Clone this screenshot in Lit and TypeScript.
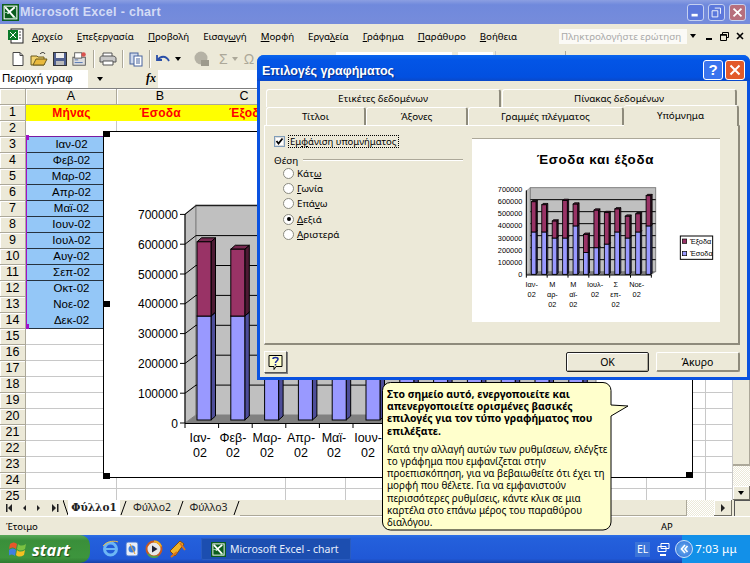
import { LitElement, html, css, svg } from "lit";
import { customElement } from "lit/decorators.js";

const VALUES: [number, number][] = [[350,600],[350,575],[300,440],[300,610],[400,580],[180,330],[220,530],[250,510],[350,540],[300,480],[350,500],[400,650]];
const MONTHS = ["Ιαν-02","Φεβ-02","Μαρ-02","Απρ-02","Μαϊ-02","Ιουν-02","Ιουλ-02","Αυγ-02","Σεπ-02","Οκτ-02","Νοε-02","Δεκ-02"];

function bar(x:number,w:number,base:number,mid:number,top:number,dx:number,dy:number,sw:number){
  const seg=(y1:number,y2:number,f:string,s:string,t:string)=>svg`
    <polygon points="${x+w},${y1} ${x+w+dx},${y1-dy} ${x+w+dx},${y2-dy} ${x+w},${y2}" fill=${s} stroke="#000" stroke-width=${sw}/>
    <polygon points="${x},${y1} ${x+dx},${y1-dy} ${x+w+dx},${y1-dy} ${x+w},${y1}" fill=${t} stroke="#000" stroke-width=${sw}/>
    <rect x=${x} y=${y1} width=${w} height=${y2-y1} fill=${f} stroke="#000" stroke-width=${sw}/>`;
  return svg`${seg(mid,base,"#9999ff","#4d4d99","#7777cc")}${seg(top,mid,"#993366","#4d1a33","#772850")}`;
}

function mainChart(){
  const ys=[0,1,2,3,4,5,6,7];
  const step=29.8;
  const xl=[["Ιαν-",201],["Φεβ-",234],["Μαρ-",268],["Απρ-",302],["Μαϊ-",335],["Ιουν-",369]] as [string,number][];
  return html`<svg class="chart-svg" width="590" height="347" viewBox="103 131 590 347">
    <polygon points="186,215 197,206 197,416 186,424" fill="#c0c0c0" stroke="#808080"/>
    <rect x="197" y="206" width="400" height="210" fill="#c0c0c0" stroke="#808080"/>
    <polygon points="186,424 197,416 597,416 586,424" fill="#808080"/>
    ${ys.slice(1).map(i=>svg`<line x1="197" x2="597" y1=${416-i*29.9} y2=${416-i*29.9} stroke="#000" stroke-width="1"/>
      <line x1="186" x2="197" y1=${424-i*step} y2=${416-i*29.9} stroke="#000" stroke-width="1"/>`)}
    ${VALUES.map((v,i)=>bar(198+i*33.8,14,421,421-v[0]*0.297,421-v[1]*0.297,4.5,4,1))}
    <line x1="186" x2="186" y1="215" y2="424" stroke="#000"/>
    <line x1="186" x2="590" y1="424.5" y2="424.5" stroke="#000"/>
    ${[0,1,2,3,4,5,6,7,8,9,10,11,12].map(i=>svg`<line x1=${186+i*33.6} x2=${186+i*33.6} y1="424" y2="429" stroke="#000"/>`)}
    ${ys.map(i=>svg`<line x1="181" x2="186" y1=${424-i*step} y2=${424-i*step} stroke="#000"/>
      <text class="c-y" x="179" y=${428.5-i*step} text-anchor="end">${i===0?"0":i+"00000"}</text>`)}
    ${xl.map(([t,x])=>svg`<text class="c-x" x=${x} y="443" text-anchor="middle">${t}</text>
      <text class="c-x" x=${x} y="458" text-anchor="middle">02</text>`)}
  </svg>`;
}

function miniChart(){
  const lab:[string[],number][]=[[["Ιαν-","02"],200],[["Μ","αρ-","02"],262],[["Μ","αϊ-","02"],325],[["Ιουλ-","02"],390],[["Σ","επ-","02"],452],[["Νοε-","02"],515]];
  return html`<svg class="mini" width="248" height="183" viewBox="21 24 744 549">
    <text class="m-title" x="391" y="98" text-anchor="middle">Έσοδα και έξοδα</text>
    <polygon points="184,180 196,170 196,418 184,431" fill="#c0c0c0" stroke="#808080" stroke-width="2"/>
    <rect x="196" y="170" width="376" height="252" fill="#c0c0c0" stroke="#808080" stroke-width="3"/>
    <polygon points="184,431 196,422 572,422 560,431" fill="#808080"/>
    ${[1,2,3,4,5,6].map(i=>svg`<line x1="196" x2="572" y1=${422-i*36} y2=${422-i*36} stroke="#000" stroke-width="3"/>`)}
    ${VALUES.map((v,i)=>bar(199+i*31.3,14,430,430-v[0]*0.363,430-v[1]*0.363,4,4,2.6))}
    <line x1="184" x2="560" y1="432" y2="432" stroke="#000" stroke-width="3"/>
    <line x1="184" x2="184" y1="178" y2="432" stroke="#000" stroke-width="3"/>
    ${[0,1,2,3,4,5,6,7].map(i=>svg`<text class="m-y" x="172" y=${438-i*36.4} text-anchor="end">${i===0?"0":i+"00000"}</text>`)}
    ${[0,1,2,3,4,5,6].map(i=>svg`<line x1=${184+i*62.5} x2=${184+i*62.5} y1="432" y2="440" stroke="#000" stroke-width="3"/>`)}
    ${lab.map(([ls,x])=>ls.map((t,k)=>svg`<text class="m-y" x=${x} y=${467+k*31} text-anchor="middle">${t}</text>`))}
    <rect x="646" y="315" width="97" height="70" fill="#fff" stroke="#000" stroke-width="3"/>
    <rect x="652" y="324" width="13" height="13" fill="#993366" stroke="#000" stroke-width="2"/>
    <text class="m-y" x="675" y="338">Έξοδα</text>
    <rect x="652" y="361" width="13" height="13" fill="#9999ff" stroke="#000" stroke-width="2"/>
    <text class="m-y" x="675" y="375">Έσοδα</text>
  </svg>`;
}

const xlIcon=(s:number)=>html`<svg width=${s} height=${s} viewBox="0 0 16 16"><rect width="16" height="16" fill="#0b5d1e"/><rect x="2" y="2" width="12" height="12" fill="#0b5d1e" stroke="#fff" stroke-width="1"/><path d="M3 3l9 10M12 3L5 9" stroke="#fff" stroke-width="1.8" fill="none"/><path d="M2 8h4M10 13h4" stroke="#8fd19e"/></svg>`;

const tools = html`
  <svg width="16" height="16" viewBox="0 0 16 16"><path d="M3 1.5h7l3 3v10H3z" fill="#fff" stroke="#444"/><path d="M10 1.5v3h3" fill="none" stroke="#444"/></svg>
  <svg width="18" height="16" viewBox="0 0 18 16"><path d="M1 5h6l1 1h6v8H1z" fill="#f3d36b" stroke="#6b5a1e"/><path d="M3 14l3-6h11l-3 6z" fill="#e9b93c" stroke="#6b5a1e"/><path d="M10 3c2-2 4-2 5 0" stroke="#222" fill="none"/></svg>
  <svg width="16" height="16" viewBox="0 0 16 16"><rect x="1.5" y="1.5" width="13" height="13" fill="#4f5f8f" stroke="#333"/><rect x="4" y="2" width="8" height="5" fill="#eee"/><rect x="4" y="10" width="8" height="4" fill="#bbb"/></svg>
  <svg width="16" height="18" viewBox="0 0 18 18"><rect x="1" y="7" width="14" height="9" fill="#ddd" stroke="#555"/><rect x="3" y="2" width="8" height="6" fill="#fff" stroke="#555"/><circle cx="13" cy="4" r="2.5" fill="#d9534f"/><path d="M3 10h4M3 13h9" stroke="#4a6fb0"/></svg>
  <i class="sep"></i>
  <svg width="18" height="16" viewBox="0 0 18 16"><path d="M4 2h9v4H4z" fill="#fff" stroke="#555"/><path d="M1 7c0-1 1-2 2-2h11c1 0 3 1 3 2v4H1z" fill="#c8c8c8" stroke="#555"/><path d="M4 10h10v4H4z" fill="#fff" stroke="#555"/></svg>
  <i class="sep"></i>
  <svg width="16" height="16" viewBox="0 0 16 16"><rect x="2" y="2" width="8" height="11" fill="#cfd9ec" stroke="#46629c"/><rect x="6" y="5" width="8" height="10" fill="#fff" stroke="#46629c"/><path d="M8 8h4M8 10h4M8 12h4" stroke="#46629c"/></svg>
  <i class="sep"></i>
  <svg width="16" height="14" viewBox="0 0 16 14"><path d="M2 3v5h5M3 8c2-4 8-5 11 1" fill="none" stroke="#2a4fa8" stroke-width="1.8"/></svg>
  <b class="tri small"></b>
  <i class="gap"></i>
  <svg width="20" height="18" viewBox="0 0 20 18"><circle cx="9" cy="8" r="6.5" fill="#b5b2a5"/><rect x="9" y="10" width="8" height="6" fill="#9d9a8c"/></svg>
  <span class="sigma">Σ</span><b class="tri small grey"></b>
  <span class="sigma om">Ω</span>`;

const sliver = html`<div class="sliver"><i class="sb a"></i><i class="sb b"></i><i class="sl c"></i><i class="sl d"></i></div>`;

@customElement("app-root")
export class AppRoot extends LitElement {
  static styles = css`
    :host{display:block;width:750px;height:563px;position:relative;overflow:hidden;background:#ece9d8;font-family:"Noto Sans","Liberation Sans",sans-serif;font-size:9.8px;color:#000}
    .app{display:flex;flex-direction:column;height:563px}
    .title{height:24px;flex:none;display:flex;align-items:center;padding-left:2px;gap:1px;background:linear-gradient(#8b9fe2 0,#7089dc 20%,#768cdb 100%)}
    .title .txt{font:bold 12.5px "Liberation Sans",sans-serif;color:#d3dbf5;letter-spacing:.3px;margin-top:-1px}
    .capbtns{margin-left:auto;display:flex;gap:4px;padding-right:4px}
    .cb{width:17px;height:17px;border-radius:3px;border:1px solid #c5d0f0;background:#5c78dc;position:relative;box-sizing:border-box}
    .cb svg{position:absolute;inset:0}
    .cb.x{background:#b76f7d}
    .menu{height:24px;flex:none;display:flex;align-items:center;padding-left:8px;position:relative}
    .menu .mi{margin-right:14px;white-space:nowrap;font-size:9.7px}
    .menu .grip{margin-right:8px;display:flex}
    .ask{margin-left:auto;margin-right:6px;display:flex;align-items:center}
    .askbox{width:128px;height:15px;background:#fbfaf6;color:#a9a9a9;line-height:15px;padding-left:2px;box-sizing:border-box;overflow:hidden;white-space:nowrap}
    .tri{display:inline-block;width:0;height:0;border:3.5px solid transparent;border-top:4px solid #000;border-bottom:0}
    .tri.small{margin-left:0}
    .tri.grey{border-top-color:#aca899}
    .tri.askt{margin-left:3px}
    .win{display:flex;gap:7px;margin-left:9px;align-items:center}
    .toolbar{height:22px;flex:none;display:flex;align-items:center;padding-left:10px;gap:4px;position:relative}
    .sep{width:1px;height:18px;background:#aca899;margin:0 0 0 1px;border-right:1px solid #fff}
    .gap{width:3px}
    .sigma{font:14px "Liberation Sans",sans-serif;color:#aca899;margin-left:3px}
    .sigma.om{margin-left:2px}
    .sliver{position:absolute;left:0;top:0;width:750px;height:22px}
    .sb{position:absolute;top:4px;height:6px;background:#fff}
    .sb.a{left:336px;width:116px}.sb.b{left:458px;width:35px}
    .sl{position:absolute;top:3px;height:8px;width:1px;background:#aca899}
    .sl.c{left:495px}.sl.d{left:565px}
    .fbar{height:18px;flex:none;display:flex;align-items:stretch}
    .name{width:88px;background:#fff;font:11.5px/17px "Liberation Sans",sans-serif;padding-left:2px;box-sizing:border-box;white-space:nowrap;overflow:hidden}
    .namedrop{width:22px;display:flex;align-items:center;justify-content:center;padding-left:2px;box-sizing:border-box}
    .fx{width:48px;text-align:right;padding-right:2px;box-sizing:border-box;font:italic bold 12px "Liberation Serif",serif;line-height:17px}
    .finput{flex:1;background:#fff}
    .main{flex:1;min-height:0;display:flex;position:relative}
    .sheet{width:733px;height:412px;overflow:hidden;display:grid;grid-template-columns:26px 91px 86px 83px 60px 301px 59px 27px;grid-auto-rows:16px;background:#fff;border-top:1px solid #808080;box-sizing:border-box;font:11.500px "Liberation Sans",sans-serif}
    .h{background:#ece9d8;border-right:1px solid #aca899;border-bottom:1px solid #aca899;box-sizing:border-box;text-align:center;line-height:15px;font-size:12.5px;box-shadow:inset 1px 1px 0 #fff}
    .h.nol{border-right:0}
    .h.nos{box-shadow:inset 0 1px 0 #fff}
    .c{border-right:1px solid #c8c8c8;border-bottom:1px solid #c8c8c8;box-sizing:border-box;white-space:nowrap;text-align:center;line-height:15px}
    .c.nor{border-right:0}
    .c.y{background:#ff0;border:0;color:#f00;font-weight:bold;font-size:12px;letter-spacing:.2px;overflow:visible;line-height:17px}
    .c.left{text-align:left;padding-left:26px}
    .c.blue{background:#94c7f7;border-right:0;border-bottom:1px solid #26333f}
    .c.blue.nob{border-bottom:0}
    .vscroll{width:17px;height:412px;display:flex;flex-direction:column}
    .vthumb{height:379px;border-right:1px solid #aca899;border-bottom:2px solid #aca899;box-sizing:border-box;background:#ece9d8}
    .hatch{background:repeating-conic-gradient(#fff 0 25%,#ece9d8 0 50%) 0 0/2px 2px}
    .vtrack{height:20px}
    .sbtn{background:#ece9d8;border-right:1px solid #716f64;border-bottom:1px solid #716f64;box-shadow:inset 1px 1px 0 #fff;box-sizing:border-box;display:flex;align-items:center;justify-content:center}
    .vbtn{height:14px}
    .tabs{height:16px;flex:none;display:flex;align-items:center}
    .nav{width:60px;display:flex;align-items:center;height:16px;flex:none}
    .ar{width:0;height:0;border:4px solid transparent;border-right:0;border-left:4px solid #222}
    .sheets{display:flex;align-items:center;height:16px;margin-left:3px;width:177px;flex:none}
    .st{height:16px;line-height:15px;text-align:center;white-space:nowrap;color:#222;font-size:10.500px}
    .st.on{background:#fff;font:bold 10.5px "DejaVu Serif",serif;width:52px;line-height:15px}
    .st.off.a{width:50px}.st.off.b{width:49px}
    .slash{flex:none}
    .hs{flex:1;display:flex;height:16px}
    .hthumb{width:447px;flex:none;border-right:1px solid #aca899;border-bottom:1px solid #aca899;box-sizing:border-box}
    .htrack{width:27px;flex:none}
    .hbtn{width:18px;flex:none}
    .splitbox{margin-left:2px;width:16px;border-left:1px solid #555;border-top:1px solid #555;box-sizing:border-box}
    .status{height:19px;flex:none;display:flex;align-items:center;padding-left:6px;border-top:1px solid #fff;box-sizing:border-box;position:relative;font-size:9.500px}
    .status .ap{position:absolute;left:661px;top:3px}
    .taskbar{height:28px;flex:none;display:flex;align-items:center;background:linear-gradient(#2c6fe6 0,#2460dc 12%,#2058d6 85%,#1941a5 100%);color:#fff}
    .start{width:90px;height:28px;background:linear-gradient(#5aa95a,#3a8f3a 20%,#3d953d 80%,#2f7a2f);border-radius:0 10px 10px 0;display:flex;align-items:center;gap:5px;padding-left:9px;box-sizing:border-box;font:italic bold 16.5px "Open Sans","Liberation Sans",sans-serif;color:#fff;text-shadow:1px 1px 1px #1e4f1e;flex:none}
    .ql{display:flex;gap:5px;margin-left:12px;width:88px;align-items:center;flex:none}
    .task{width:150px;height:22px;background:#1c4eb0;border-radius:2px;display:flex;align-items:center;padding-left:10px;gap:4px;box-sizing:border-box;font:10.5px "Noto Sans",sans-serif;margin-left:11px;color:#e8eefc;white-space:nowrap;flex:none;box-shadow:inset 0 0 0 1px #2a5cc0}
    .tray{margin-left:auto;height:28px;width:120px;display:flex;align-items:center;flex:none;box-sizing:border-box;font-size:10.5px}
    .lang{margin-left:5px;background:#3c74d8;padding:0 2px;height:15px;line-height:15px;width:15px;box-sizing:border-box;flex:none}
    .net{margin-left:7px;display:flex;flex:none}
    .chev{margin-left:5px;margin-right:-11px;width:18px;height:18px;border-radius:50%;background:radial-gradient(#6cb0f0,#2c6fd8);border:1px solid #cfe3fb;box-sizing:border-box;display:flex;align-items:center;justify-content:center;position:relative;z-index:1;flex:none}
    .clock{background:#1290e8;flex:1;height:28px;line-height:27px;text-align:center;font-size:11.5px;letter-spacing:.2px}

    .chart{position:absolute;left:103px;top:131px;width:590px;height:347px;background:#fff;border:1.5px solid #000;box-sizing:border-box}
    .chart-svg{position:absolute;left:-2px;top:-2px;display:block}
    .chart text{fill:#000;font-family:"Liberation Sans",sans-serif}
    .c-y{font-size:12px}.c-x{font-size:12.5px}
    .hd{position:absolute;width:7px;height:6px;background:#000}
    .hd.p1{left:103px;top:131px}.hd.p2{left:103px;top:301px}.hd.p3{left:103px;top:473px}.hd.p4{left:686px;top:472px}
    .pm{position:absolute;left:26px;width:3px;height:5px;background:#a012c8}
    .pm.t{top:135px}.pm.b{top:324px}
    .pline{position:absolute;left:26px;top:136px;height:191px;width:1px;background:#a012c8}
    .ptop{position:absolute;left:26px;top:136px;height:1px;width:78px;background:#7a1aa0}

    .dialog{position:absolute;left:257px;top:55px;width:493px;height:325px;background:#0a52e0;border-radius:7px 7px 0 0;display:flex;flex-direction:column}
    .dtitle{height:26px;flex:none;background:linear-gradient(#0a66ee,#0355e6 20%,#0250e0 85%,#0a48c8);border-radius:7px 7px 0 0;display:flex;align-items:center;padding-left:5px;color:#fff;font:bold 12.5px "Liberation Sans",sans-serif;text-shadow:1px 1px 1px #0a2f8a}
    .dtitle .dt{margin-top:6px}
    .dbtn{width:20px;height:20px;border:1px solid #fff;border-radius:3px;box-sizing:border-box;position:relative;display:flex;align-items:center;justify-content:center;font:bold 15px "Liberation Sans",sans-serif;text-shadow:none;margin-top:3px}
    .dbtn.q{margin-left:auto;background:#3a74ee}
    .dbtn.cl{margin-left:2px;margin-right:5px;background:#e25a2a}
    .dbody{flex:1;margin:0 3px 3px;background:#ece9d8;padding-top:8px;display:flex;flex-direction:column;min-height:0}
    .trow{display:flex;height:18px;margin-left:6px;flex:none;align-items:flex-end}
    .tab{height:18px;box-sizing:border-box;text-align:center;line-height:18px;border:1px solid #fff;border-bottom:0;border-right:2px solid #8e8b7c;border-radius:3px 3px 0 0;flex:none;white-space:nowrap}
    .tab.w235{width:235px}.tab.w1{width:100px}.tab.w2{width:102px}.tab.w3{width:156px}
    .tab.gapl{margin-left:1px}
    .tab.act{width:115px;height:21px;line-height:20px;margin-bottom:-1px;background:#ece9d8;position:relative;z-index:2;border-left:0}
    .panel{height:220px;margin:0 7px 0 4px;border:1px solid #fff;border-right:2px solid #8e8b7c;border-bottom:2px solid #8e8b7c;box-sizing:border-box;display:flex;flex:none}
    .pleft{width:207px;flex:none;padding:9px 0 0 9px;box-sizing:border-box}
    .ck{display:flex;align-items:center;gap:3px;height:13px}
    .box{width:11px;height:11px;background:#fff;border:1px solid #7f9db9;box-sizing:border-box;display:flex;box-shadow:inset 0 0 0 1px #ddd;flex:none}
    .focus{border:1px dotted #000;padding:0 1px;line-height:11px;height:13px;box-sizing:border-box;white-space:nowrap;width:111px;font-size:9.5px}
    .leg{display:flex;align-items:center;margin-top:5px;height:14px;gap:5px}
    .leg i{flex:1;height:1px;background:#aca899;border-bottom:1px solid #fff;margin-right:9px}
    .radios{margin:-1px 0 0 9px;display:flex;flex-direction:column}
    .rad{display:flex;align-items:center;gap:3px;height:15.2px}
    .dot{width:11px;height:11px;border-radius:50%;background:#fff;border:1px solid #8a8a80;box-sizing:border-box;display:flex;align-items:center;justify-content:center;flex:none}
    .dot b{width:4px;height:4px;border-radius:50%;background:#000;display:none}
    .dot.on b{display:block}
    .preview{width:248px;height:183px;margin-top:12px;background:#fff;border-top:1px solid #aca899;flex:none;overflow:hidden}
    .mini{display:block}
    .mini text{font-family:"Liberation Sans",sans-serif;fill:#000}
    .m-title{font-size:40px;font-weight:bold;letter-spacing:2px}
    .m-y{font-size:22px}
    .dfoot{flex:1;display:flex;align-items:center;padding:2px 0 0 4px;position:relative}
    .hbox{width:23px;height:22px;border:1px solid #555;border-top-color:#fff;border-left-color:#fff;box-shadow:1px 1px 0 #808080;box-sizing:border-box;display:flex;align-items:center;justify-content:center;flex:none}
    .btn{height:20px;text-align:center;line-height:18px;box-sizing:border-box;border-radius:2px;font-size:10.5px;background:#ece9d8;flex:none}
    .btn.ok{width:83px;margin-left:279px;border:1px solid #222;box-shadow:inset 1px 1px 0 #fff,inset -1px -1px 0 #aca899}
    .btn.no{width:84px;margin-left:7px;border:1px solid #fff;border-right-color:#8e8b7c;border-bottom-color:#8e8b7c;border-width:1px 2px 2px 1px}

    .tip{position:absolute;left:382px;top:382px;width:230px;height:149px}
    .tip svg{position:absolute;left:0;top:0}
    .tipt{position:relative;padding:6px 4px 0 5px;font-size:9.9px;line-height:12.2px;white-space:nowrap}
    .tipt .bd{font-weight:bold;font-size:10.4px;margin-bottom:6px}
  `;

  private renderSheet(){
    const cells=[html`<div class="h"></div>`,
      html`<div class="h">A</div>`,html`<div class="h nol">B</div>`,html`<div class="h nos">C</div>`,
      html`<div class="h">D</div>`,html`<div class="h">E</div>`,html`<div class="h">F</div>`,html`<div class="h">G</div>`];
    for(let r=1;r<=25;r++){
      cells.push(html`<div class="h">${r}</div>`);
      if(r===1){
        cells.push(html`<div class="c y">Μήνας</div><div class="c y">Έσοδα</div><div class="c y left">Έξοδα</div><div class="c y"></div><div class="c y"></div><div class="c y"></div><div class="c y"></div>`);
      } else if(r>=3&&r<=14){
        const cls = r>=12&&r<14 ? "c blue nob" : "c blue";
        cells.push(html`<div class=${cls}>${MONTHS[r-3]}</div>`);
        for(let i=0;i<6;i++) cells.push(html`<div class="c"></div>`);
      } else {
        cells.push(html`<div class="c"></div><div class="c nor"></div><div class="c"></div><div class="c"></div><div class="c"></div><div class="c"></div><div class="c"></div>`);
      }
    }
    return cells;
  }

  render(){
    return html`
    <div class="app">
      <div class="title">${xlIcon(17)}<span class="txt">Microsoft Excel - chart</span>
        <div class="capbtns">
          <div class="cb"><svg viewBox="0 0 17 17"><rect x="4" y="10" width="7" height="3" fill="#fff"/></svg></div>
          <div class="cb"><svg viewBox="0 0 17 17"><path d="M6.5 3.5h6.5v6.5M3.5 6.5h6.5v7h-6.5z" fill="none" stroke="#fff"/></svg></div>
          <div class="cb x"><svg viewBox="0 0 17 17"><path d="M4 4l9 9M13 4l-9 9" stroke="#fff" stroke-width="2"/></svg></div>
        </div>
      </div>
      <div class="menu">
        <span class="grip"><svg width="16" height="18" viewBox="0 0 16 18"><rect x="3" y="2" width="12" height="14" fill="#fff" stroke="#222"/><rect x="0" y="3" width="10" height="10" fill="#0b7a2a"/><path d="M2 5l6 6M8 5l-6 6" stroke="#fff"/><path d="M11 5h2M11 8h2M11 11h2" stroke="#444"/></svg></span>
        <span class="mi"><u>Α</u>ρχείο</span><span class="mi"><u>Ε</u>πεξεργασία</span><span class="mi"><u>Π</u>ροβολή</span><span class="mi">Εισαγ<u>ω</u>γή</span><span class="mi"><u>Μ</u>ορφή</span><span class="mi">Εργα<u>λ</u>εία</span><span class="mi"><u>Γ</u>ράφημα</span><span class="mi"><u>Π</u>αράθυρο</span><span class="mi"><u>Β</u>οήθεια</span>
        <div class="ask"><div class="askbox">Πληκτρολογήστε ερώτηση</div><b class="tri askt"></b>
          <div class="win"><svg width="8" height="8" viewBox="0 0 8 8"><rect x="1" y="6" width="6" height="2" fill="#000"/></svg><svg width="9" height="9" viewBox="0 0 9 9"><path d="M2.5 2V.5h6v5H7M.5 2.5h6v6h-6z" fill="none" stroke="#000"/><path d="M.5 3h6" stroke="#000" stroke-width="1.5"/></svg><svg width="8" height="8" viewBox="0 0 8 8"><path d="M1 1l6 6M7 1L1 7" stroke="#000" stroke-width="1.6"/></svg></div>
        </div>
      </div>
      <div class="toolbar">${tools}${sliver}</div>
      <div class="fbar"><div class="name">Περιοχή γραφ</div><div class="namedrop"><b class="tri"></b></div><div class="fx">fx</div><div class="finput"></div></div>
      <div class="main">
        <div class="sheet">${this.renderSheet()}</div>
        <div class="vscroll"><div class="vthumb"></div><div class="vtrack hatch"></div><div class="sbtn vbtn"><b class="tri"></b></div></div>
      </div>
      <div class="tabs">
        <div class="nav"><svg width="60" height="16" viewBox="0 0 60 16"><path d="M6 4h1.500v8H6zM12 4v8L8 8zM26 5v6l-3-3zM37 5v6l3-3zM52 4v8l4-4zM57 4h1.500v8H57z" fill="#222"/></svg></div>
        <div class="sheets">
          <svg class="slash" width="5" height="16" viewBox="0 0 5 16"><path d="M0 0l5 15" stroke="#000" fill="none"/></svg>
          <div class="st on">Φύλλο1</div>
          <svg class="slash" width="7" height="16" viewBox="0 0 7 16"><path d="M6 1L1 15" stroke="#000" fill="none"/></svg>
          <div class="st off a">Φύλλο2</div>
          <svg class="slash" width="7" height="16" viewBox="0 0 7 16"><path d="M6 1L1 15" stroke="#000" fill="none"/></svg>
          <div class="st off b">Φύλλο3</div>
          <svg class="slash" width="7" height="16" viewBox="0 0 7 16"><path d="M6 1L1 15" stroke="#000" fill="none"/></svg>
        </div>
        <div class="hs"><div class="hthumb"></div><div class="htrack hatch"></div><div class="sbtn hbtn"><i class="ar"></i></div><div class="splitbox"></div></div>
      </div>
      <div class="status">Έτοιμο<span class="ap">ΑΡ</span></div>
      <div class="taskbar">
        <div class="start"><svg width="18" height="17" viewBox="0 0 18 17"><path d="M1 3c3-2 5-2 7 0l-1 5C5 6 3 6 0 8z" fill="#e8562a"/><path d="M9 3c2 2 5 2 8 0l-1 5c-3 2-6 2-8 0z" fill="#7cc142"/><path d="M0 9c3-2 5-2 7 0l-1 6c-2-2-4-2-7 0z" fill="#3f7fe0"/><path d="M8 9c2 2 5 2 8 0l-1 5c-3 2-6 2-8 0z" fill="#f4c021"/></svg>start</div>
        <div class="ql">
          <svg width="17" height="18" viewBox="0 0 17 18"><circle cx="8.500" cy="9" r="6" fill="none" stroke="#6db6f5" stroke-width="3"/><path d="M3 9h11" stroke="#6db6f5" stroke-width="2"/><path d="M1 6c5-6 13-5 15-4" fill="none" stroke="#f0c040"/></svg>
          <svg width="16" height="18" viewBox="0 0 16 18"><rect x="2" y="2" width="12" height="14" rx="2" fill="#e9eef8" stroke="#3a6fd0"/><circle cx="8" cy="9" r="3.5" fill="#3a7fe0"/><path d="M6 4l5 10" stroke="#e8a030"/></svg>
          <svg width="18" height="18" viewBox="0 0 18 18"><circle cx="9" cy="9" r="7.5" fill="#e8e8e8" stroke="#c85a20" stroke-width="2"/><path d="M9 1.5a7.5 7.5 0 0 1 7 5" stroke="#f0b020" stroke-width="2" fill="none"/><path d="M3 14a7.5 7.5 0 0 0 10 2" stroke="#50a050" stroke-width="2" fill="none"/><path d="M7 5.5l5.5 3.5L7 12.5z" fill="#223"/></svg>
          <svg width="20" height="20" viewBox="0 0 20 20"><path d="M2 12l10-10 4 3-9 12z" fill="#f0b428" stroke="#804a10"/><path d="M3 18l6-5M12 4l5 7" stroke="#d9731c" stroke-width="2"/></svg>
        </div>
        <div class="task">${xlIcon(15)}<span>Microsoft Excel - chart</span></div>
        <div class="tray">
          <span class="lang">EL</span>
          <span class="net"><svg width="13" height="14" viewBox="0 0 13 14"><path d="M4 1.5h8v5H4zM1 4.5h8v5H1z" fill="none" stroke="#fff"/><rect x="3" y="12" width="6" height="2" fill="#fff"/></svg></span>
          <span class="chev"><svg width="10" height="10" viewBox="0 0 10 10"><path d="M6 1L2.5 5 6 9M8.500 2L6 5l2.500 3" fill="none" stroke="#fff" stroke-width="1.600"/></svg></span>
          <span class="clock">7:03 μμ</span>
        </div>
      </div>
    </div>

    <div class="chart">${mainChart()}</div>
    <i class="pline"></i><i class="ptop"></i><i class="pm t"></i><i class="pm b"></i>
    <i class="hd p1"></i><i class="hd p2"></i><i class="hd p3"></i><i class="hd p4"></i>

    <div class="dialog">
      <div class="dtitle"><span class="dt">Επιλογές γραφήματος</span>
        <div class="dbtn q">?</div>
        <div class="dbtn cl"><svg width="12" height="12" viewBox="0 0 12 12"><path d="M1.500 1.500l9 9M10.500 1.500l-9 9" stroke="#fff" stroke-width="2"/></svg></div>
      </div>
      <div class="dbody">
        <div class="trow"><div class="tab w235">Ετικέτες δεδομένων</div><div class="tab w235 gapl">Πίνακας δεδομένων</div></div>
        <div class="trow"><div class="tab w1">Τίτλοι</div><div class="tab w2">Άξονες</div><div class="tab w3">Γραμμές πλέγματος</div><div class="tab act">Υπόμνημα</div></div>
        <div class="panel">
          <div class="pleft">
            <div class="ck"><span class="box"><svg width="9" height="9" viewBox="0 0 9 9"><path d="M1.500 4l2 2.500L7.500 1.500" fill="none" stroke="#000" stroke-width="1.800"/></svg></span><span class="focus">Εμ<u>φ</u>άνιση υπομνήματος</span></div>
            <div class="leg">Θέση<i></i></div>
            <div class="radios">
              <div class="rad"><span class="dot"><b></b></span><span>Κάτ<u>ω</u></span></div>
              <div class="rad"><span class="dot"><b></b></span><span><u>Γ</u>ωνία</span></div>
              <div class="rad"><span class="dot"><b></b></span><span>Επά<u>ν</u>ω</span></div>
              <div class="rad"><span class="dot on"><b></b></span><span><u>Δ</u>εξιά</span></div>
              <div class="rad"><span class="dot"><b></b></span><span><u>Α</u>ριστερά</span></div>
            </div>
          </div>
          <div class="preview">${miniChart()}</div>
        </div>
        <div class="dfoot">
          <div class="hbox"><svg width="17" height="17" viewBox="0 0 17 17"><path d="M2 1.500h13v11H9l-2 3v-3H2z" fill="#ffffc8" stroke="#000"/><path d="M6 5c0-2 5-2 5 0 0 2-2.500 2-2.500 4M8.500 10v1.500" fill="none" stroke="#1a2aa0" stroke-width="1.600"/></svg></div>
          <div class="btn ok">ΟΚ</div>
          <div class="btn no">Άκυρο</div>
        </div>
      </div>
    </div>

    <div class="tip">
      <svg width="250" height="150" viewBox="0 0 250 150"><path d="M8.500 .5H221a8 8 0 0 1 8 8V23L246 24 229 34V140a8 8 0 0 1-8 8H8.500a8 8 0 0 1-8-8V8.500a8 8 0 0 1 8-8z" fill="#ffffcc" stroke="#000"/></svg>
      <div class="tipt">
        <div class="bd">Στο σημείο αυτό, ενεργοποιείτε και<br>απενεργοποιείτε ορισμένες βασικές<br>επιλογές για τον τύπο γραφήματος που<br>επιλέξατε.</div>
        <div>Κατά την αλλαγή αυτών των ρυθμίσεων, ελέγξτε<br>το γράφημα που εμφανίζεται στην<br>προεπισκόπηση, για να βεβαιωθείτε ότι έχει τη<br>μορφή που θέλετε. Για να εμφανιστούν<br>περισσότερες ρυθμίσεις, κάντε κλικ σε μια<br>καρτέλα στο επάνω μέρος του παραθύρου<br>διαλόγου.</div>
      </div>
    </div>`;
  }
}
